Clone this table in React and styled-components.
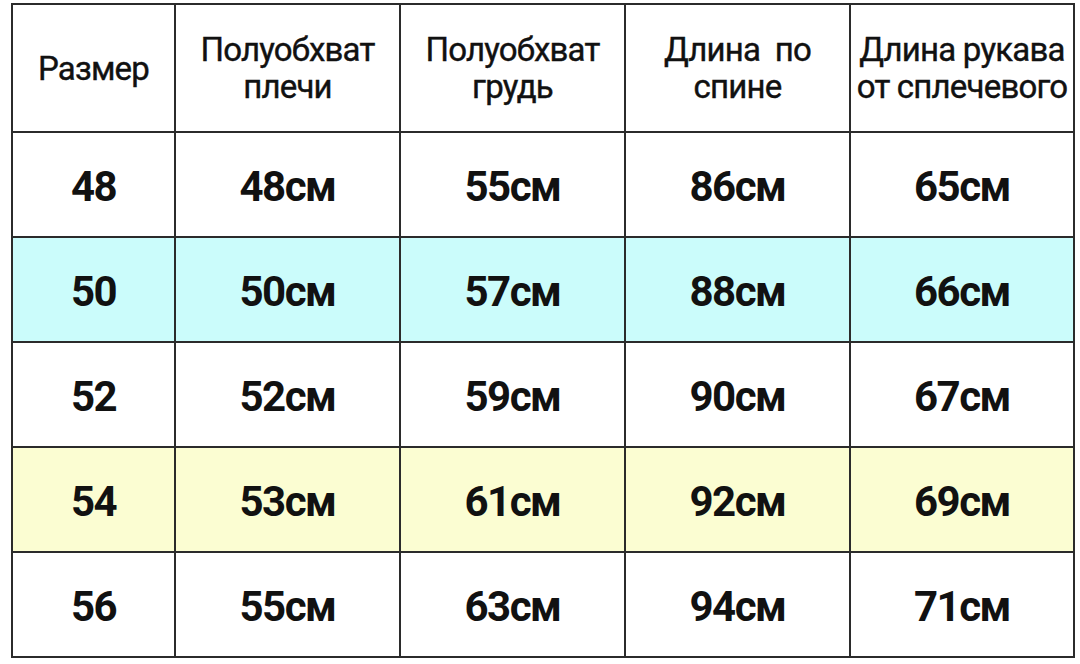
import React from "react";
import styled, { createGlobalStyle } from "styled-components";

const Global = createGlobalStyle`
  html, body { margin: 0; padding: 0; background: #ffffff; }
  body { font-family: Roboto, "Noto Sans", sans-serif; color: #111; }
`;

const Page = styled.div`
  width: 1080px;
  height: 664px;
  padding: 3px 0 0 11px;
  box-sizing: border-box;
  background: #fff;
`;

const Grid = styled.div`
  display: grid;
  grid-template-columns: 161px 223px 223px 223px 222px;
  grid-template-rows: 126px repeat(5, 103px);
  gap: 2px;
  padding: 2px;
  width: max-content;
  background: #2b2b2b;
`;

const Cell = styled.div`
  display: flex;
  align-items: center;
  justify-content: center;
  text-align: center;
  background: ${(p) => p.$bg || "#ffffff"};
  color: #111;
`;

const HeadCell = styled(Cell)`
  font-size: 33px;
  font-weight: 400;
  line-height: 37px;
  letter-spacing: -0.8px;
  white-space: pre;
  -webkit-text-stroke: 0.4px #111;
`;

const ValueCell = styled(Cell)`
  font-size: 42px;
  font-weight: 700;
  letter-spacing: -1.5px;
  padding-top: 4px;
`;

const headers = [
  "Размер",
  "Полуобхват\nплечи",
  "Полуобхват\nгрудь",
  "Длина  по\nспине",
  "Длина рукава\nот сплечевого",
];

const rows = [
  { bg: "#ffffff", v: ["48", "48см", "55см", "86см", "65см"] },
  { bg: "#cbfcfb", v: ["50", "50см", "57см", "88см", "66см"] },
  { bg: "#ffffff", v: ["52", "52см", "59см", "90см", "67см"] },
  { bg: "#fbfdd2", v: ["54", "53см", "61см", "92см", "69см"] },
  { bg: "#ffffff", v: ["56", "55см", "63см", "94см", "71см"] },
];

export default function App() {
  return (
    <>
      <Global />
      <Page>
        <Grid>
          {headers.map((h) => (
            <HeadCell key={h}>{h}</HeadCell>
          ))}
          {rows.map((r, i) =>
            r.v.map((val, j) => (
              <ValueCell key={`${i}-${j}`} $bg={r.bg}>
                {val}
              </ValueCell>
            ))
          )}
        </Grid>
      </Page>
    </>
  );
}
